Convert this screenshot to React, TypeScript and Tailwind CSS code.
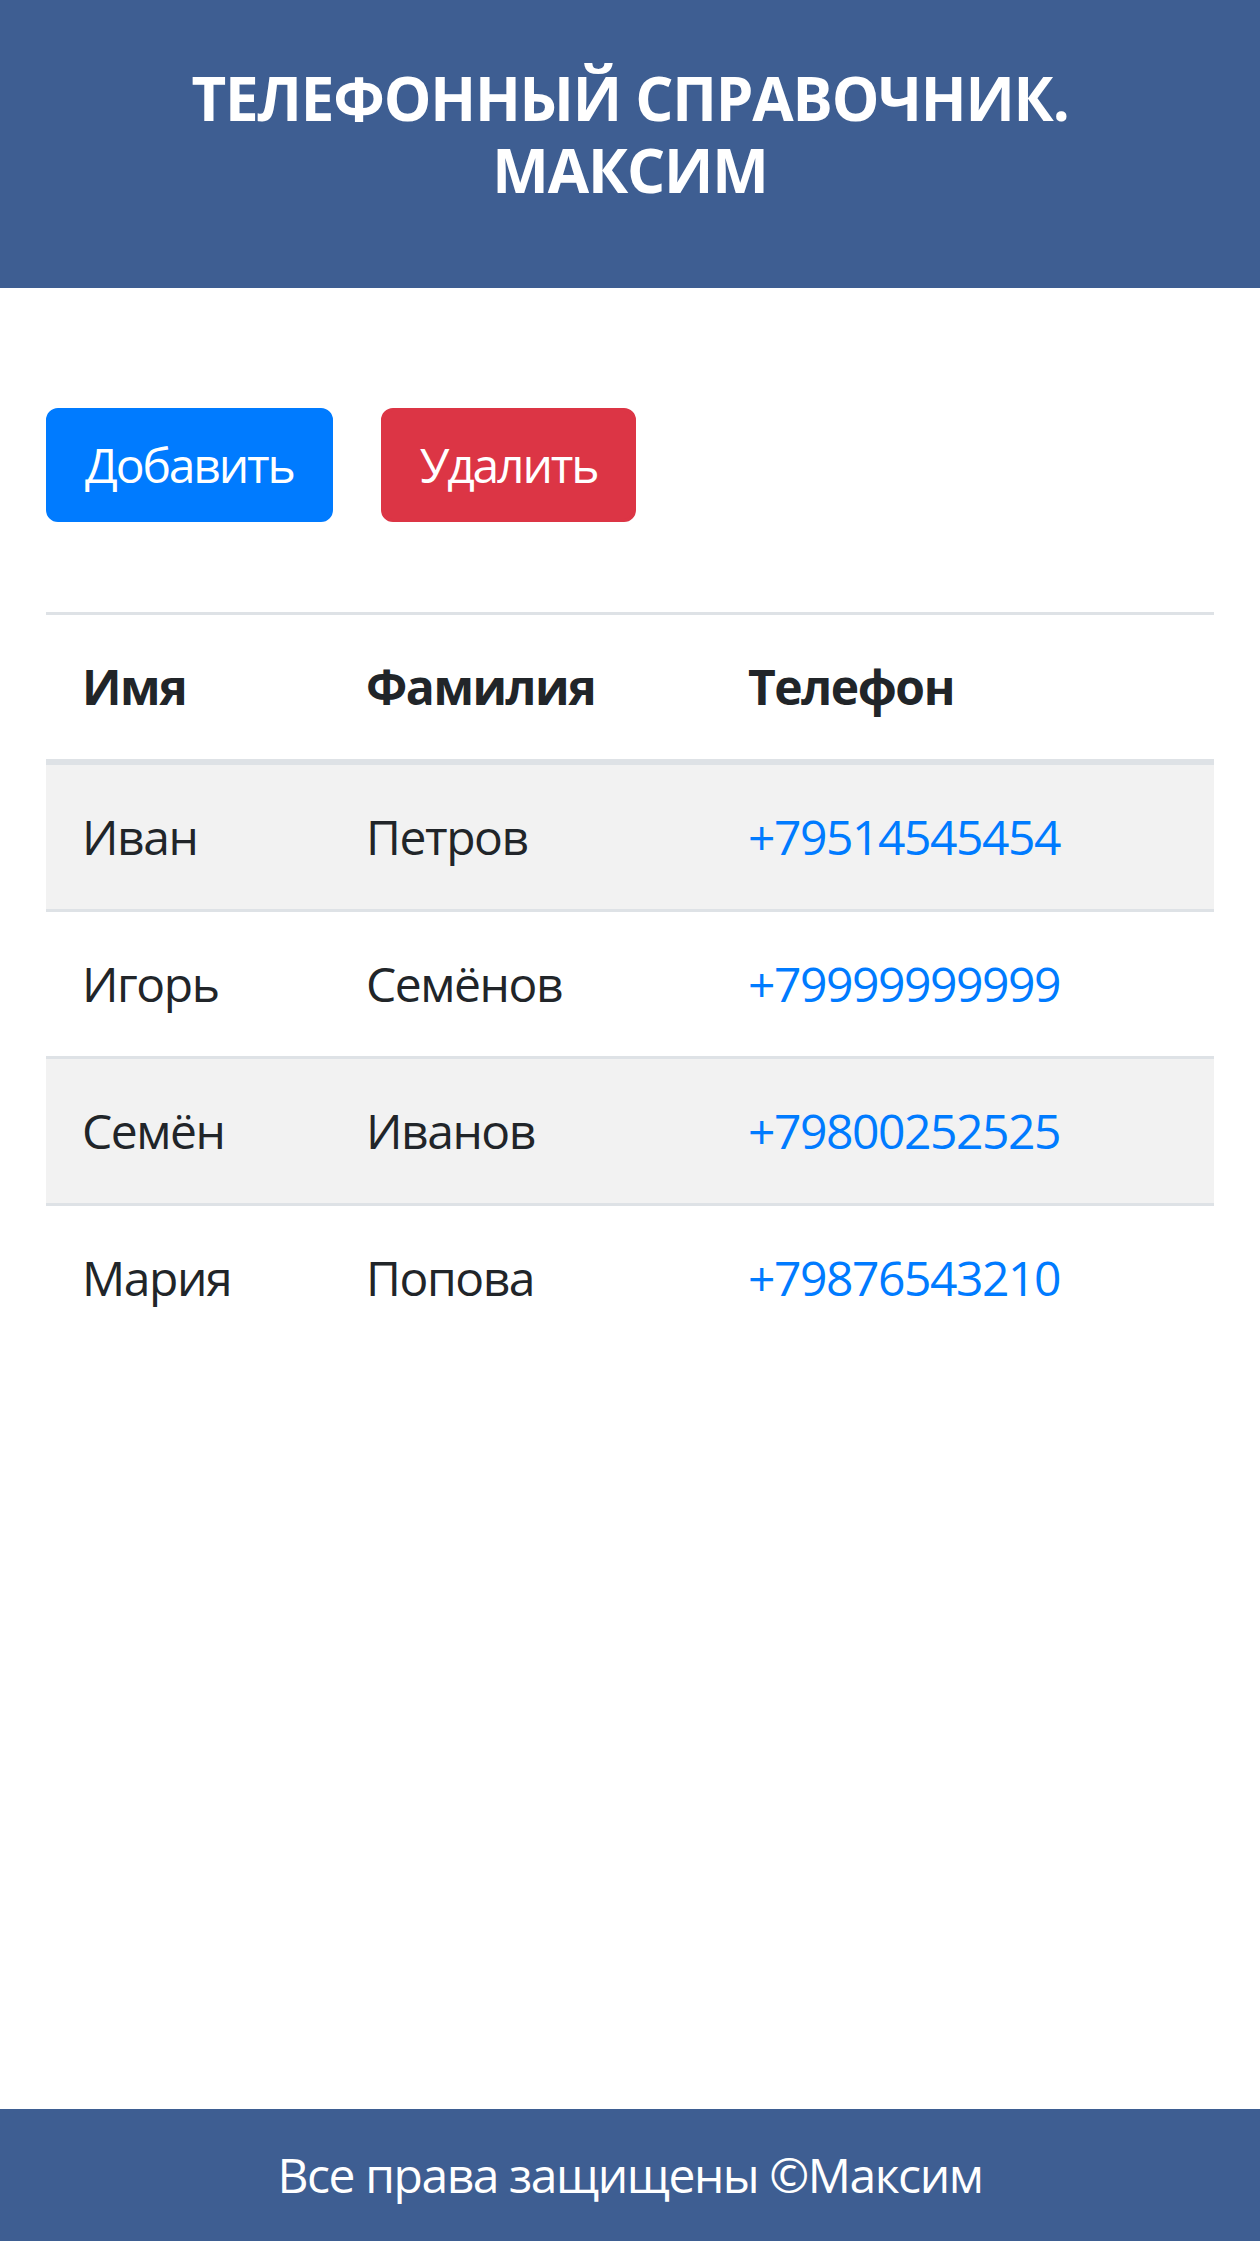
import React from "react";

const contacts = [
  { name: "Иван", surname: "Петров", phone: "+79514545454" },
  { name: "Игорь", surname: "Семёнов", phone: "+79999999999" },
  { name: "Семён", surname: "Иванов", phone: "+79800252525" },
  { name: "Мария", surname: "Попова", phone: "+79876543210" },
];

const App = () => {
  return (
    <div
      className="flex min-h-[2241px] flex-col bg-white text-[48px] leading-[1.5] text-[#212529]"
      style={{ fontFamily: '"Open Sans", "Noto Sans", sans-serif' }}
    >
      <header className="bg-[#3e5e92] px-[45px] pt-[62px] pb-[82px] text-center">
        <h1 className="mx-auto max-w-[960px] text-[60px] font-bold uppercase leading-[1.2] tracking-[-0.02em] text-white">
          Телефонный справочник. Максим
        </h1>
      </header>

      <main className="flex-1 px-[46px] pt-[120px]">
        <div className="flex gap-[48px]">
          <button className="h-[114px] rounded-[12px] border-[3px] border-[#007bff] bg-[#007bff] px-[36px] tracking-[-0.045em] text-white">
            Добавить
          </button>
          <button className="h-[114px] rounded-[12px] border-[3px] border-[#dc3545] bg-[#dc3545] px-[36px] tracking-[-0.045em] text-white">
            Удалить
          </button>
        </div>

        <table className="mt-[90px] w-full border-collapse tracking-[-0.03em]">
          <thead>
            <tr className="border-t-[3px] border-b-[6px] border-[#dee2e6]">
              <th className="w-[284px] p-[36px] text-left font-bold">Имя</th>
              <th className="w-[382px] p-[36px] text-left font-bold">Фамилия</th>
              <th className="p-[36px] text-left font-bold">Телефон</th>
            </tr>
          </thead>
          <tbody>
            {contacts.map((c, i) => (
              <tr
                key={c.phone}
                className={
                  i % 2 === 0
                    ? "border-t-[3px] border-[#dee2e6] bg-[#f2f2f2]"
                    : "border-t-[3px] border-[#dee2e6]"
                }
              >
                <td className="p-[36px]">{c.name}</td>
                <td className="p-[36px]">{c.surname}</td>
                <td className="p-[36px]">
                  <a href={`tel:${c.phone}`} className="text-[#007bff]">
                    {c.phone}
                  </a>
                </td>
              </tr>
            ))}
          </tbody>
        </table>
      </main>

      <footer className="bg-[#3e5e92] py-[30px] text-center tracking-[-0.03em] text-white">
        Все права защищены ©Максим
      </footer>
    </div>
  );
};

export default App;
